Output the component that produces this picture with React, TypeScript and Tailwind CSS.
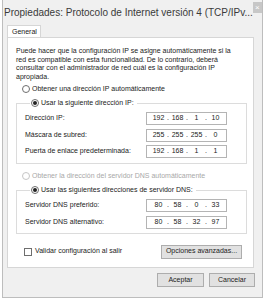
import React from 'react';

const font = { fontFamily: '"Liberation Sans", Arial, sans-serif' };

function Radio({ checked, disabled }: { checked?: boolean; disabled?: boolean }) {
  return (
    <span
      className={`flex h-[8px] w-[8px] shrink-0 items-center justify-center rounded-full border bg-white ${
        disabled ? 'border-[#c6c6c6]' : 'border-[#6e6e6e]'
      }`}
    >
      {checked && <span className="h-[4px] w-[4px] rounded-full bg-[#222]" />}
    </span>
  );
}

function IpField({ parts }: { parts: string[] }) {
  return (
    <div className="flex h-[13px] w-[81px] items-center border border-[#b4b4b4] bg-white pl-[4px] text-[7px] text-[#222]">
      {parts.map((p, i) => (
        <React.Fragment key={i}>
          <span className="w-[15px] text-center">{p}</span>
          {i < 3 && <span className="w-[4px] text-center">.</span>}
        </React.Fragment>
      ))}
    </div>
  );
}

function Row({ label, parts }: { label: string; parts: string[] }) {
  return (
    <div className="flex items-center justify-between">
      <span>{label}</span>
      <IpField parts={parts} />
    </div>
  );
}

function Button({ children, className = '' }: { children: React.ReactNode; className?: string }) {
  return (
    <button
      className={`flex h-[14px] items-center justify-center border border-[#adadad] bg-[#e1e1e1] text-[7px] text-[#222] ${className}`}
    >
      {children}
    </button>
  );
}

export default function App() {
  return (
    <div className="h-[300px] w-[263px] overflow-hidden bg-white" style={font}>
      <div className="ml-[2px] flex h-[298px] w-[261px] flex-col border-x border-b border-[#bdbdbd] bg-[#f0f0f0]">
        {/* Title bar */}
        <div className="flex h-[25px] items-start justify-between">
          <span className="mt-[7px] pl-[1px] text-[10px] leading-[12px] text-[#3a3a3a] whitespace-nowrap">
            Propiedades: Protocolo de Internet versión 4 (TCP/IPv...
          </span>
          <span className="mt-[2px] flex h-[11px] w-[15px] items-center justify-center bg-[#c7c7c7] text-[8px] leading-none text-white">
            ×
          </span>
        </div>

        {/* Tab */}
        <div className="ml-[4px] flex">
          <div className="-mb-px flex h-[13px] w-[34px] items-center border-x border-t border-[#d6d6d6] bg-white pl-[4px] text-[7px] text-[#222]">
            General
          </div>
        </div>

        {/* Panel */}
        <div className="ml-[4px] flex h-[231px] w-[247px] flex-col border border-[#d6d6d6] bg-white px-[8px] pt-[9px] text-[7px] leading-[8.7px] text-[#222]">
          <p>
            Puede hacer que la configuración IP se asigne automáticamente si la
            <br />
            red es compatible con esta funcionalidad. De lo contrario, deberá
            <br />
            consultar con el administrador de red cuál es la configuración IP
            <br />
            apropiada.
          </p>

          <div className="mt-[3px] flex h-[9px] items-center gap-[2px] pl-[6px]">
            <Radio />
            <span>Obtener una dirección IP automáticamente</span>
          </div>

          <fieldset className="mt-[5px] mr-[-2px] border border-[#dcdcdc] px-[8px] pt-[4.5px] pb-[5px] pr-[19px]">
            <legend className="ml-[5px] flex h-[9px] items-center gap-[2px] pl-[1px] pr-[3px]">
              <Radio checked />
              <span>Usar la siguiente dirección IP:</span>
            </legend>
            <div className="flex flex-col gap-[3.5px]">
              <Row label="Dirección IP:" parts={['192', '168', '1', '10']} />
              <Row label="Máscara de subred:" parts={['255', '255', '255', '0']} />
              <Row label="Puerta de enlace predeterminada:" parts={['192', '168', '1', '1']} />
            </div>
          </fieldset>

          <div className="mt-[7.5px] flex h-[9px] items-center gap-[2px] pl-[6px] text-[#a8a8a8]">
            <Radio disabled />
            <span>Obtener la dirección del servidor DNS automáticamente</span>
          </div>

          <fieldset className="mt-[5px] mr-[-2px] border border-[#dcdcdc] px-[8px] pt-[4.5px] pb-[4px] pr-[19px]">
            <legend className="ml-[5px] flex h-[9px] items-center gap-[2px] pl-[1px] pr-[3px]">
              <Radio checked />
              <span>Usar las siguientes direcciones de servidor DNS:</span>
            </legend>
            <div className="flex flex-col gap-[3.5px]">
              <Row label="Servidor DNS preferido:" parts={['80', '58', '0', '33']} />
              <Row label="Servidor DNS alternativo:" parts={['80', '58', '32', '97']} />
            </div>
          </fieldset>

          <div className="mt-[11px] flex items-center justify-between pl-[8px] pr-[3px]">
            <div className="flex items-center gap-[3px]">
              <span className="h-[8px] w-[8px] border border-[#6e6e6e] bg-white" />
              <span>Validar configuración al salir</span>
            </div>
            <Button className="w-[81px]">Opciones avanzadas...</Button>
          </div>
        </div>

        {/* Dialog buttons */}
        <div className="mt-[5px] flex justify-end gap-[5px] pr-[7px]">
          <Button className="w-[47px]">Aceptar</Button>
          <Button className="w-[46px]">Cancelar</Button>
        </div>
      </div>
    </div>
  );
}
